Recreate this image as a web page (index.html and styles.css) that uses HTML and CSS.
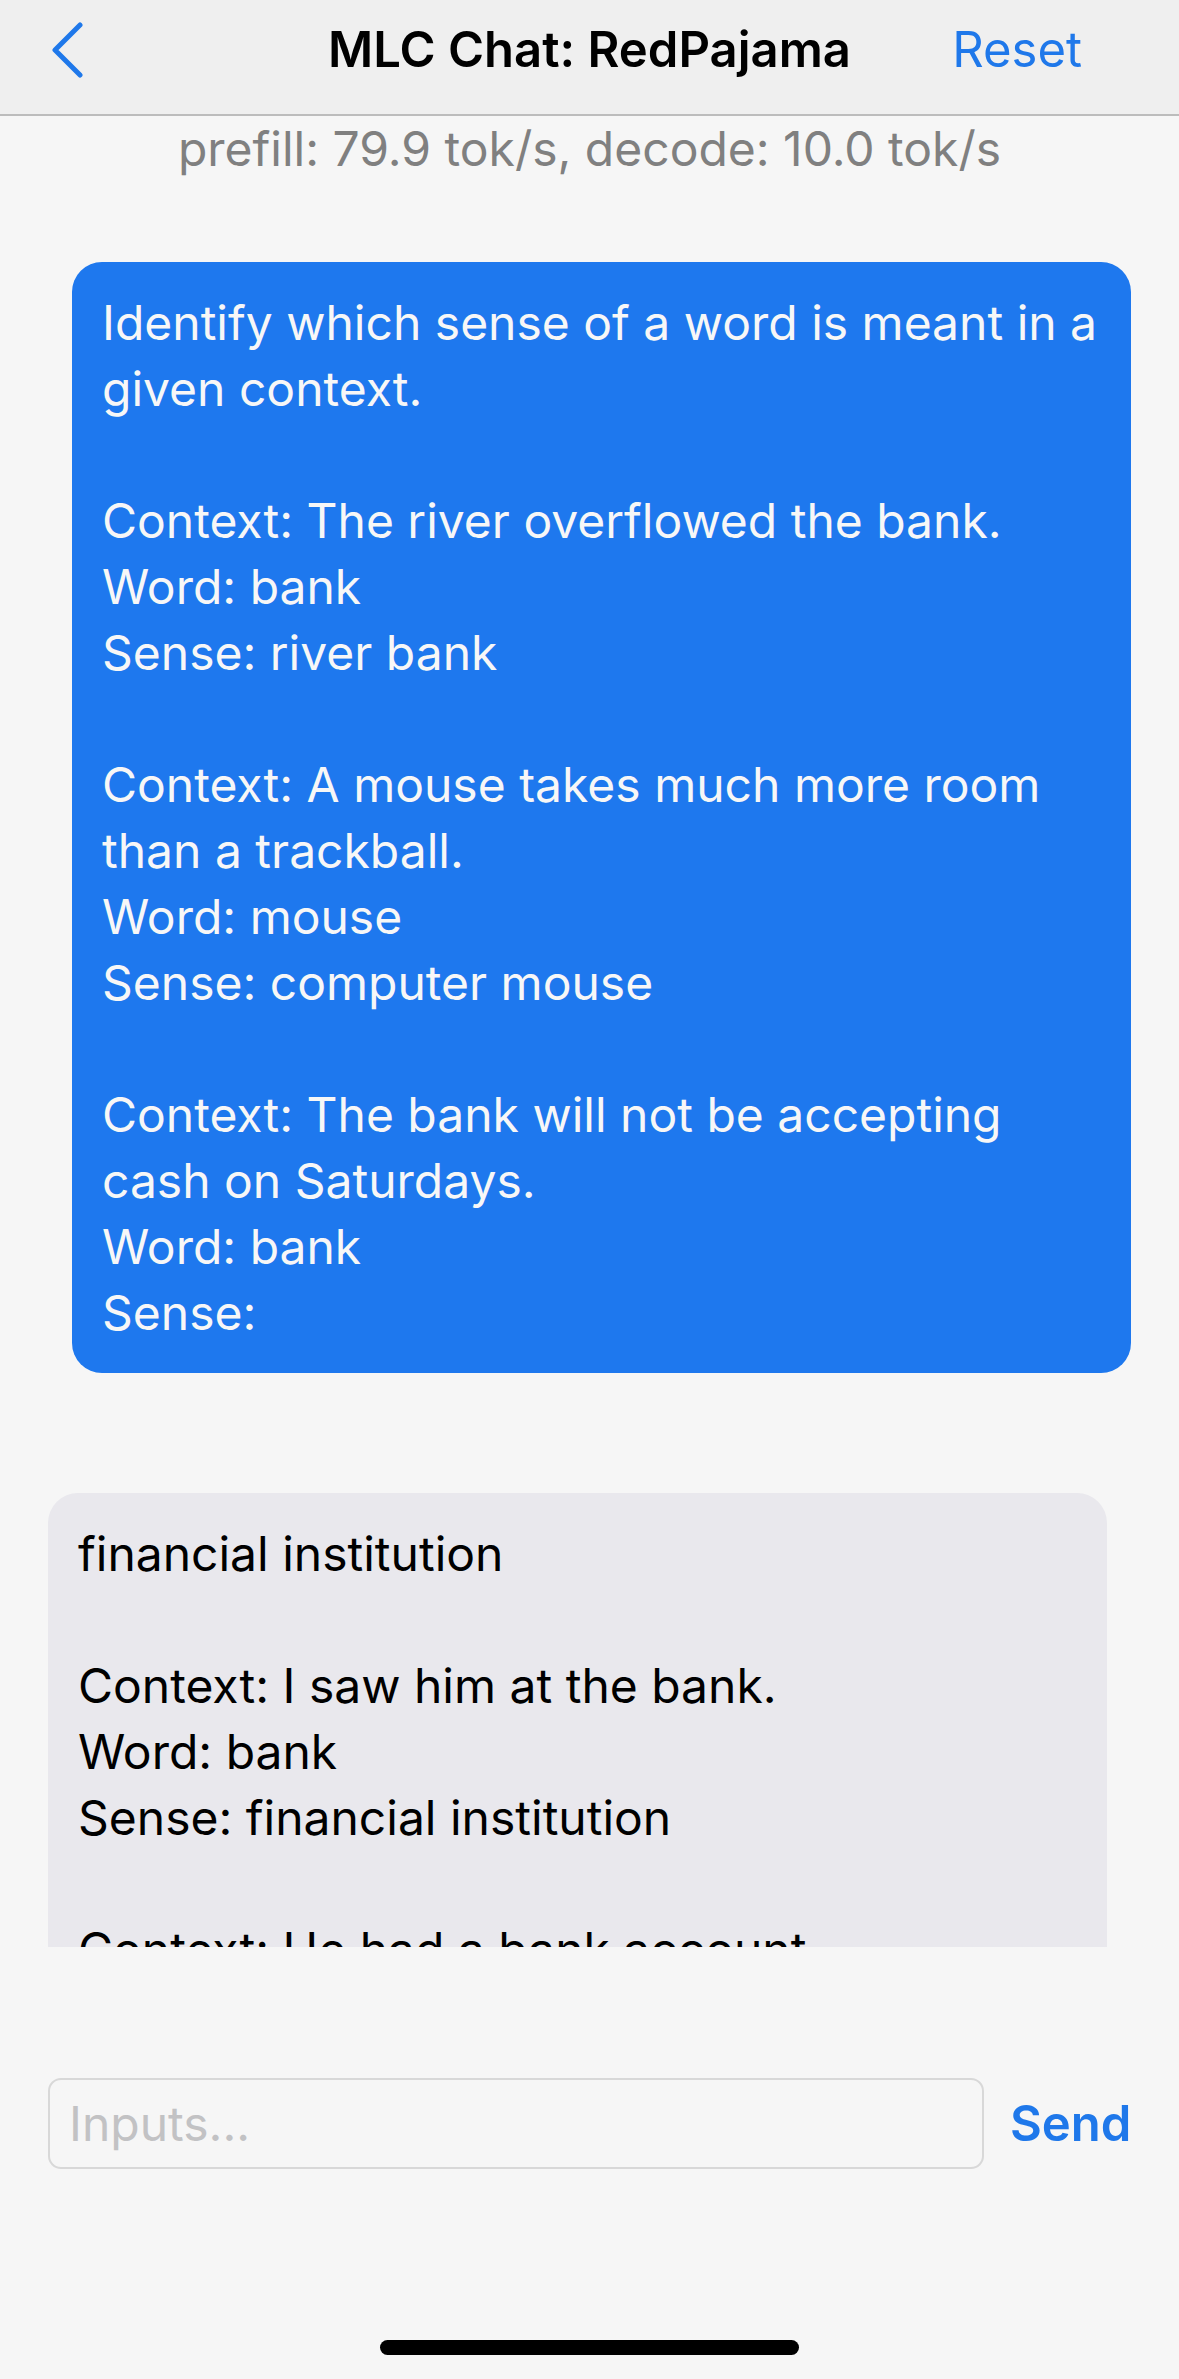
FILE: index.html
```html
<!DOCTYPE html>
<html lang="en">
<head>
<meta charset="utf-8">
<title>MLC Chat: RedPajama</title>
<link rel="stylesheet" href="styles.css">
</head>
<body>
<div class="app">
  <header class="nav">
    <div class="nav-left">
      <svg class="back" width="34" height="56" viewBox="0 0 34 56" aria-hidden="true">
        <path d="M29 3 L4 28 L29 53" fill="none" stroke="#1f78ea" stroke-width="5" stroke-linecap="round" stroke-linejoin="round"/>
      </svg>
    </div>
    <div class="nav-title">MLC Chat: RedPajama</div>
    <div class="nav-right"><span class="reset">Reset</span></div>
  </header>
  <main class="messages">
    <div class="stats">prefill: 79.9 tok/s, decode: 10.0 tok/s</div>
    <div class="bubble user">Identify which sense of a word is meant in a
given context.

Context: The river overflowed the bank.
Word: bank
Sense: river bank

Context: A mouse takes much more room
than a trackball.
Word: mouse
Sense: computer mouse

Context: The bank will not be accepting
cash on Saturdays.
Word: bank
Sense:</div>
    <div class="bubble bot">financial institution

Context: I saw him at the bank.
Word: bank
Sense: financial institution

Context: He had a bank account.
Word: bank
Sense: financial institution</div>
  </main>
  <footer class="composer">
    <div class="input-row">
      <div class="input"><span class="placeholder">Inputs...</span></div>
      <span class="send">Send</span>
    </div>
    <div class="home-indicator"></div>
  </footer>
</div>
</body>
</html>
```

FILE: styles.css
```css
* { box-sizing: border-box; }
html, body {
  margin: 0;
  padding: 0;
  background: #f6f6f6;
}
body {
  font-family: Inter, "Noto Sans", "Liberation Sans", sans-serif;
  font-size: 48px;
  line-height: 66px;
  color: #000;
}
.app {
  width: 1179px;
  height: 2379px;
  display: flex;
  flex-direction: column;
  overflow: hidden;
}
.nav {
  height: 116px;
  flex: none;
  background: #efefef;
  border-bottom: 2px solid #bcbcbc;
  display: grid;
  grid-template-columns: 1fr auto 1fr;
  align-items: start;
}
.nav-left {
  padding: 22px 0 0 51px;
}
.back { display: block; }
.nav-title {
  font-size: 49px;
  font-weight: 600;
  padding-top: 17px;
}
.nav-right {
  display: flex;
  justify-content: flex-end;
  padding: 17px 97px 0 0;
}
.reset {
  color: #1f78ea;
  font-size: 49px;
}
.messages {
  flex: 1;
  overflow: hidden;
  display: flex;
  flex-direction: column;
  min-height: 0;
}
.stats {
  text-align: center;
  color: #808080;
  margin-bottom: 80px;
  flex: none;
}
.bubble {
  flex: none;
  white-space: pre;
  border-radius: 30px;
  padding: 28px 30px 27px 30px;
  width: 1059px;
}
.user {
  align-self: flex-end;
  margin-right: 48px;
  background: #1e78ee;
  color: #f7f7f7;
}
.bot {
  align-self: flex-start;
  margin-left: 48px;
  margin-top: 120px;
  background: #e9e8ed;
  color: #000;
  padding-left: 30px;
}
.composer {
  flex: none;
  height: 432px;
  padding-top: 131px;
  display: flex;
  flex-direction: column;
}
.input-row {
  display: flex;
  align-items: center;
  padding: 0 0 0 48px;
  gap: 26px;
}
.input {
  flex: none;
  width: 936px;
  height: 91px;
  border: 2px solid #d8d8d8;
  border-radius: 13px;
  padding-left: 19px;
  display: flex;
  align-items: center;
}
.placeholder { color: #c2c2c4; }
.send {
  flex: none;
  color: #1f78ea;
  font-weight: 600;
  font-size: 49px;
}
.home-indicator {
  width: 419px;
  height: 15px;
  border-radius: 8px;
  background: #000;
  margin: 171px auto 0;
}
```
